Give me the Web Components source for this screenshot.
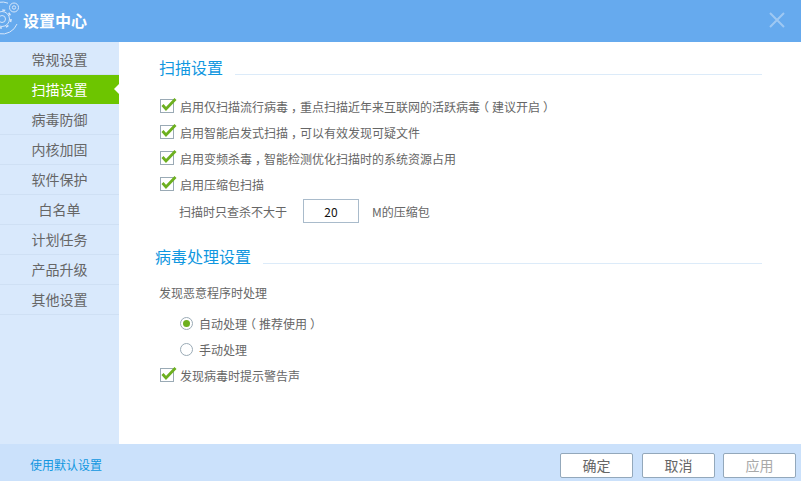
<!DOCTYPE html>
<html lang="zh">
<head>
<meta charset="utf-8">
<title>设置中心</title>
<style>
  html, body { margin: 0; padding: 0; width: 801px; height: 481px; overflow: hidden; }
  body { font-family: "Noto Sans CJK SC", "Liberation Sans", sans-serif; font-size: 12px; color: #666; }
</style>
</head>
<body>
<settings-window></settings-window>

<script>
class TitleBar extends HTMLElement {
  constructor() {
    super();
    this.attachShadow({ mode: "open" });
    this.shadowRoot.innerHTML = `
      <style>
        :host { display: flex; align-items: center; height: 42px; background: #66aaee; color: #fff; }
        svg.logo { flex: none; width: 23px; height: 42px; }
        .name { font-size: 16px; font-weight: 700; margin-bottom: 2px; }
        .spacer { flex: 1; }
        svg.close { flex: none; width: 16px; height: 16px; margin: 0 16px 3px 0; }
      </style>
      <svg class="logo" viewBox="0 0 23 42" fill="none" stroke="#d5e6fa" stroke-width="1">
        <path d="M-1 2.300 A16 16 0 0 1 8 3.200"/>
        <path d="M17 24 A16 16 0 0 1 -1 33.700"/>
        <circle cx="14" cy="7.500" r="4.500"/>
        <circle cx="14" cy="7.500" r="1.700"/>
        <circle cx="2" cy="19" r="7.500"/>
        <circle cx="2" cy="19" r="9" stroke-width="1.600" stroke-dasharray="3 4.070"/>
        <circle cx="2" cy="19" r="3.500"/>
      </svg>
      <span class="name"><slot></slot></span>
      <span class="spacer"></span>
      <svg class="close" viewBox="0 0 16 16" stroke="#9ec8f3" stroke-width="2"><path d="M1 1 L15 15 M15 1 L1 15"/></svg>
    `;
  }
}

class NavItem extends HTMLElement {
  constructor() {
    super();
    this.attachShadow({ mode: "open" });
    this.shadowRoot.innerHTML = `
      <style>
        :host { display: flex; align-items: center; justify-content: center; height: 30px; box-sizing: border-box; padding-bottom: 2px; border-bottom: 1px solid #cfe0f4; color: #666; font-size: 14px; position: relative; }
        :host([active]) { background: #6dc500; color: #fff; border-bottom-color: #d9e9fc; }
        :host([active])::after { content: ""; position: absolute; right: 0; top: 9px; border: 5px solid transparent; border-left: 0; border-right: 5px solid #fff; }
      </style>
      <slot></slot>
    `;
  }
}

class SideNav extends HTMLElement {
  constructor() {
    super();
    this.attachShadow({ mode: "open" });
    this.shadowRoot.innerHTML = `
      <style>
        :host { display: flex; flex-direction: column; flex: none; width: 119px; padding-top: 3px; box-sizing: border-box; background: #d9e9fc; }
      </style>
      <slot></slot>
    `;
  }
}

class SectionHead extends HTMLElement {
  constructor() {
    super();
    this.attachShadow({ mode: "open" });
    this.shadowRoot.innerHTML = `
      <style>
        :host { display: flex; align-items: flex-end; height: 24px; }
        .t { color: #1097e0; font-size: 16px; line-height: 24px; }
        .l { flex: 1; height: 1px; background: #dcebf9; margin-left: 12px; margin-bottom: 4px; }
      </style>
      <span class="t"><slot></slot></span><span class="l"></span>
    `;
  }
}

class CheckRow extends HTMLElement {
  constructor() {
    super();
    this.attachShadow({ mode: "open" });
    this.shadowRoot.innerHTML = `
      <style>
        :host { display: flex; align-items: center; height: 26px; color: #666; font-size: 12px; }
        svg { flex: none; width: 21px; height: 16px; margin-top: -2px; }
      </style>
      <svg viewBox="0 0 21 16" fill="none">
        <rect x="1.500" y="2.500" width="13" height="13" fill="#fff" stroke="#9aaab5"/>
        <path d="M3.500 8 L7 12 L16.500 2" stroke="#6db01f" stroke-width="2.800"/>
      </svg>
      <span><slot></slot></span>
    `;
  }
}

class RadioRow extends HTMLElement {
  constructor() {
    super();
    this.attachShadow({ mode: "open" });
    this.shadowRoot.innerHTML = `
      <style>
        :host { display: flex; align-items: center; height: 26px; color: #666; font-size: 12px; padding-left: 21px; }
        svg { flex: none; width: 13px; height: 13px; margin-right: 6px; }
        circle.dot { display: none; }
        :host([checked]) circle.dot { display: block; }
      </style>
      <svg viewBox="0 0 13 13">
        <circle cx="6.500" cy="6.500" r="6" fill="#fff" stroke="#9aaab5"/>
        <circle class="dot" cx="6.500" cy="6.500" r="3.500" fill="#6db01f"/>
      </svg>
      <span><slot></slot></span>
    `;
  }
}

class FootButton extends HTMLElement {
  constructor() {
    super();
    this.attachShadow({ mode: "open" });
    this.shadowRoot.innerHTML = `
      <style>
        :host { display: flex; align-items: center; justify-content: center; width: 73px; height: 25px; box-sizing: border-box; background: #fff; border: 1px solid #93a8bb; border-radius: 2px; color: #666; font-size: 14px; }
        :host([disabled]) { color: #a9a9a9; }
      </style>
      <slot></slot>
    `;
  }
}

class SettingsWindow extends HTMLElement {
  constructor() {
    super();
    this.attachShadow({ mode: "open" });
    this.shadowRoot.innerHTML = `
      <style>
        :host { display: flex; flex-direction: column; width: 801px; height: 481px; background: #fff; }
        .body { display: flex; flex: 1; min-height: 0; }
        .main { flex: 1; padding: 13px 39px 0 40px; box-sizing: border-box; }
        .rows { margin-top: 14px; }
        /* 逗号和括号在原图里靠中间：半宽字形加两边留白 */
        .p { font-feature-settings: "halt"; padding: 0 3px; }
        .limit { display: flex; align-items: center; height: 26px; margin-top: 1px; padding-left: 20px; color: #666; font-size: 12px; }
        .limit .num { display: flex; align-items: center; justify-content: center; width: 56px; height: 24px; box-sizing: border-box; margin: 0 13px 0 16px; border: 1px solid #a9bbcb; color: #111; font-size: 12px; }
        .sec2 { margin: 20px 0 0 -4px; }
        .sub { margin-top: 13px; height: 24px; line-height: 24px; font-size: 12px; color: #666; }
        .radios { margin-top: 5px; }
        .footer { display: flex; align-items: center; flex: none; height: 37px; padding: 0 5px 0 30px; box-sizing: border-box; background: #cbe1fb; }
        .footer a { color: #1097e0; font-size: 12px; text-decoration: none; margin-top: 3px; }
        .footer .spacer { flex: 1; }
        .btns { display: flex; gap: 8px; margin-top: 5px; }
        .btns foot-button:first-child { margin-right: 1px; }
      </style>
      <title-bar>设置中心</title-bar>
      <div class="body">
        <side-nav>
          <nav-item>常规设置</nav-item>
          <nav-item active>扫描设置</nav-item>
          <nav-item>病毒防御</nav-item>
          <nav-item>内核加固</nav-item>
          <nav-item>软件保护</nav-item>
          <nav-item>白名单</nav-item>
          <nav-item>计划任务</nav-item>
          <nav-item>产品升级</nav-item>
          <nav-item>其他设置</nav-item>
        </side-nav>
        <div class="main">
          <section-head>扫描设置</section-head>
          <div class="rows">
            <check-row>启用仅扫描流行病毒<span class="p">，</span>重点扫描近年来互联网的活跃病毒<span class="p">（</span>建议开启<span class="p">）</span></check-row>
            <check-row>启用智能启发式扫描<span class="p">，</span>可以有效发现可疑文件</check-row>
            <check-row>启用变频杀毒<span class="p">，</span>智能检测优化扫描时的系统资源占用</check-row>
            <check-row>启用压缩包扫描</check-row>
          </div>
          <div class="limit">扫描时只查杀不大于<span class="num">20</span>M的压缩包</div>
          <section-head class="sec2">病毒处理设置</section-head>
          <div class="sub">发现恶意程序时处理</div>
          <div class="radios">
            <radio-row checked>自动处理<span class="p">（</span>推荐使用<span class="p">）</span></radio-row>
            <radio-row>手动处理</radio-row>
          </div>
          <check-row>发现病毒时提示警告声</check-row>
        </div>
      </div>
      <div class="footer">
        <a href="#">使用默认设置</a>
        <span class="spacer"></span>
        <div class="btns">
          <foot-button>确定</foot-button>
          <foot-button>取消</foot-button>
          <foot-button disabled>应用</foot-button>
        </div>
      </div>
    `;
  }
}

customElements.define("title-bar", TitleBar);
customElements.define("nav-item", NavItem);
customElements.define("side-nav", SideNav);
customElements.define("section-head", SectionHead);
customElements.define("check-row", CheckRow);
customElements.define("radio-row", RadioRow);
customElements.define("foot-button", FootButton);
customElements.define("settings-window", SettingsWindow);
</script>
</body>
</html>
